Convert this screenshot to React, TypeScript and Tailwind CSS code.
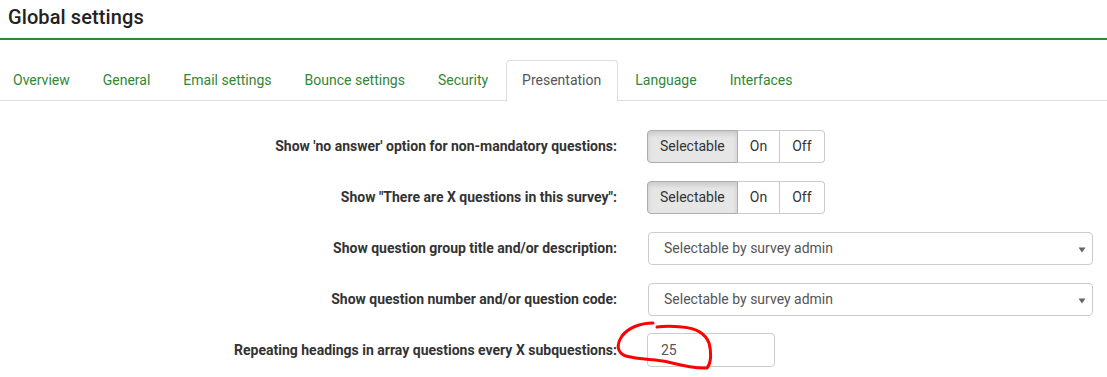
import React from "react";

const font = { fontFamily: "Roboto, 'Liberation Sans', sans-serif" };

function Caret() {
  return (
    <svg width="8" height="6" viewBox="0 0 8 6" className="absolute right-[6px] top-[14px]">
      <path d="M0.5 0.5 L7.5 0.5 L4 5.5 Z" fill="#666" />
    </svg>
  );
}

function ButtonGroup() {
  return (
    <div className="flex h-[33px] text-[14px] text-[#333]">
      <div className="flex items-center px-[12px] border border-[#adadad] rounded-l-[4px] bg-[#e6e6e6] shadow-[inset_0_3px_5px_rgba(0,0,0,0.125)]">
        Selectable
      </div>
      <div className="flex items-center px-[12px] border border-l-0 border-[#ccc] bg-white">On</div>
      <div className="flex items-center px-[12px] border border-l-0 border-[#ccc] rounded-r-[4px] bg-white">Off</div>
    </div>
  );
}

function SelectBox() {
  return (
    <div className="relative h-[33px] w-[445px] ml-px border border-[#ccc] rounded-[4px] bg-white flex items-center pl-[15px] text-[14px] text-[#555]">
      Selectable by survey admin
      <Caret />
    </div>
  );
}

function Row({ label, children }: { label: string; children: React.ReactNode }) {
  return (
    <div className="flex items-center h-[34px]">
      <div className="w-[617px] text-right font-bold text-[14px] text-[#333] pt-[1px]">{label}</div>
      <div className="ml-[30px]">{children}</div>
    </div>
  );
}

export default function App() {
  const tabs = ["Overview", "General", "Email settings", "Bounce settings", "Security", "Presentation", "Language", "Interfaces"];
  return (
    <div className="relative w-[1107px] h-[377px] bg-white overflow-hidden" style={font}>
      <div className="h-[40px] border-b-2 border-[#328637] flex items-start">
        <h1 className="ml-[8px] mt-[4px] text-[20px] font-medium text-[#222] leading-[26px] tracking-[0.1px]">Global settings</h1>
      </div>
      <div className="mt-[20px] flex border-b border-[#ddd] h-[41px]">
        {tabs.map((t, i) => {
          const active = t === "Presentation";
          return (
            <div
              key={t}
              className={
                "mr-[2px] h-[41px] flex items-center pb-[2px] text-[14px] leading-[20px] " +
                (i === 0 ? "pl-[13px] pr-[16px] " : "pl-[15px] pr-[16px] ") +
                (active
                  ? "border border-[#ddd] border-b-white bg-white rounded-t-[4px] text-[#555] -mb-px h-[42px]"
                  : "text-[#328637]")
              }
            >
              {t}
            </div>
          );
        })}
      </div>
      <div className="mt-[28px] flex flex-col gap-[17px]">
        <Row label="Show 'no answer' option for non-mandatory questions:">
          <ButtonGroup />
        </Row>
        <Row label={'Show "There are X questions in this survey":'}>
          <ButtonGroup />
        </Row>
        <Row label="Show question group title and/or description:">
          <SelectBox />
        </Row>
        <Row label="Show question number and/or question code:">
          <SelectBox />
        </Row>
        <Row label="Repeating headings in array questions every X subquestions:">
          <div className="h-[34px] w-[128px] border border-[#ccc] rounded-[4px] bg-white flex items-center pl-[13px] text-[14px] text-[#555]">
            25
          </div>
        </Row>
      </div>
      <svg className="absolute left-0 top-0 pointer-events-none" width="1107" height="377">
        <path
          d="M653 323 C640 323 628 328 622 336 C616 345 617 353 626 356 C640 360 655 359 668 362 C680 365 695 369 707 368 C712 362 711 350 709 343 C705 333 695 328 682 327 C672 326 664 326 657 327"
          fill="none"
          stroke="#f00"
          strokeWidth="3"
          strokeLinecap="round"
        />
      </svg>
    </div>
  );
}
